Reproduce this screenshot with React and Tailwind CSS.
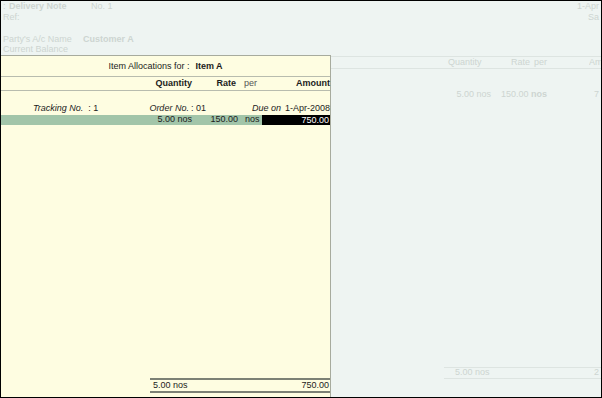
const FONT = "font-['Liberation_Sans',Arial,sans-serif]"

function BackScreen() {
  return (
    <div className="flex flex-col h-full text-[9px] text-[#cdd5d1]">
      <div className="flex items-center h-[11px] px-[2px]">
        <span className="w-[6px]">:</span>
        <span className="font-bold w-[82px]">Delivery Note</span>
        <span>No. 1</span>
        <span className="ml-auto">1-Apr</span>
      </div>
      <div className="flex items-center h-[11px] px-[2px]">
        <span>Ref:</span>
        <span className="ml-auto">Sa</span>
      </div>
      <div className="h-[12px]" />
      <div className="flex items-center h-[10px] px-[2px]">
        <span className="w-[80px]">Party's A/c Name</span>
        <span className="font-bold">Customer A</span>
      </div>
      <div className="flex items-center h-[9px] px-[2px]">
        <span>Current Balance</span>
      </div>
      <div className="flex items-center h-[13px] border-t border-b border-[#dde4e1] mt-[2px]">
        <span className="ml-[447px] w-[33px] text-right">Quantity</span>
        <span className="ml-[30px]">Rate</span>
        <span className="ml-[4px]">per</span>
        <span className="ml-auto w-[12px] overflow-hidden">Am</span>
      </div>
      <div className="h-[20px]" />
      <div className="flex items-center h-[11px]">
        <span className="ml-[452px] w-[38px] text-right">5.00 nos</span>
        <span className="ml-[10px] w-[26px] text-right">150.00</span>
        <span className="ml-[4px] font-bold">nos</span>
        <span className="ml-auto mr-[2px]">7</span>
      </div>
      <div className="flex-1" />
      <div className="flex items-center h-[12px] ml-[443px] border-t border-b border-[#dde4e1]">
        <span className="ml-[11px]">5.00 nos</span>
        <span className="ml-auto mr-[2px]">2</span>
      </div>
      <div className="h-[18px]" />
    </div>
  )
}

function AllocationPanel() {
  return (
    <div className="absolute left-0 top-[54px] w-[330px] h-[342px] bg-[#fefde1] border-t border-r border-[#a7ab9e] flex flex-col text-[9px] text-[#1c1c1c]">
      <div className="flex items-center justify-center h-[21px] pt-[1px] border-b border-[#b8bcae]">
        <span>Item Allocations for :</span>
        <span className="font-bold ml-[6px]">Item A</span>
      </div>
      <div className="flex items-center h-[14px] pt-[1px] border-b border-[#b8bcae]">
        <span className="w-[191px] text-right font-bold">Quantity</span>
        <span className="w-[44px] text-right font-bold">Rate</span>
        <span className="ml-[8px] text-[#555]">per</span>
        <span className="ml-auto font-bold">Amount</span>
      </div>
      <div className="h-[12px]" />
      <div className="flex items-center h-[12px] italic">
        <span className="ml-[32px]">Tracking No.</span>
        <span className="ml-[5px] not-italic">: 1</span>
        <span className="ml-[51px]">Order No.</span>
        <span className="ml-[2px] not-italic">: 01</span>
        <span className="ml-auto">Due on</span>
        <span className="ml-[4px] not-italic">1-Apr-2008</span>
      </div>
      <div className="flex items-center h-[10px] bg-[#a2c5a9]">
        <span className="w-[191px] text-right">5.00 nos</span>
        <span className="w-[46px] text-right">150.00</span>
        <span className="ml-[7px]">nos</span>
        <span className="ml-auto w-[68px] h-full bg-black text-white text-right pr-[1px] leading-[10px]">750.00</span>
      </div>
      <div className="flex-1" />
      <div className="flex items-center h-[15px] ml-[149px] border-t-2 border-b-2 border-[#7c8175]">
        <span className="ml-[3px]">5.00 nos</span>
        <span className="ml-auto mr-[1px]">750.00</span>
      </div>
      <div className="h-[4px]" />
    </div>
  )
}

export default function App() {
  return (
    <div className={`${FONT} w-[602px] h-[398px] border border-black bg-[#eef4f2] relative overflow-hidden`}>
      <BackScreen />
      <AllocationPanel />
    </div>
  )
}
